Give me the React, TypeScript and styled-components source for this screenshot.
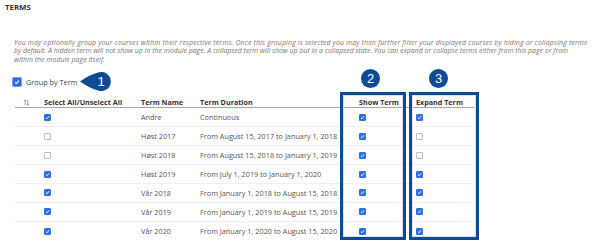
import React from 'react';
import styled, { createGlobalStyle } from 'styled-components';

const GlobalStyle = createGlobalStyle`
  body {
    margin: 0;
    background: #fff;
    font-family: "Open Sans", "Liberation Sans", sans-serif;
  }
`;

const BLUE = "#0f4b94";
const CHECK_BLUE = "#2f6fe6";

const Page = styled.div`
  width: 600px;
  height: 252px;
  padding: 2px 0 0 5px;
  box-sizing: border-box;
  display: flex;
  flex-direction: column;
  overflow: hidden;
`;

const Title = styled.div`
  font-size: 7.8px;
  line-height: 10px;
  font-weight: 700;
  color: #333;
`;

const Intro = styled.div`
  margin: 26.7px 0 0 9px;
  font-size: 6.9px;
  line-height: 8.6px;
  font-style: italic;
  color: #777;
  white-space: nowrap;
`;

const IntroLine = styled.div<{ spread: number }>`
  letter-spacing: ${p => p.spread}px;
`;

const GroupRow = styled.label`
  height: 20px;
  margin-top: 8px;
  display: flex;
  align-items: center;
  padding-left: 8px;
  font-size: 7.3px;
  color: #444;
`;

const GroupText = styled.span`
  margin-left: 5px;
`;

const Box = styled.span<{ size: number; checked: boolean; ring?: boolean }>`
  width: ${p => p.size}px;
  height: ${p => p.size}px;
  box-sizing: border-box;
  border-radius: 1px;
  display: inline-flex;
  align-items: center;
  justify-content: center;
  background: ${p => (p.checked ? CHECK_BLUE : "#fff")};
  border: 1px solid ${p => (p.checked ? CHECK_BLUE : "#bbb")};
  box-shadow: ${p => (p.ring ? "0 0 0 1px #6f9be8" : "none")};
`;

const Checkbox = ({ size, checked, ring }: { size: number; checked: boolean; ring?: boolean }) => (
  <Box size={size} checked={checked} ring={ring}>
    {checked && (
      <svg width={size - 2} height={size - 2} viewBox="0 0 10 10">
        <path d="M2 5.5 L4.2 7.5 L8 2.5" stroke="#fff" strokeWidth="1.8" fill="none" />
      </svg>
    )}
  </Box>
);

const ArrowBadge = styled.svg`
  margin-left: 3px;
  margin-top: -2px;
`;

const TableWrap = styled.div`
  position: relative;
  margin-left: 10px;
  width: 459px;
  padding-top: 5px;
`;

const COLUMNS = "29px 97px 59px 159px 57px 58px";

const HeadRow = styled.div`
  display: grid;
  grid-template-columns: ${COLUMNS};
  height: 10px;
  align-items: center;
  font-size: 7.2px;
  font-weight: 700;
  color: #333;
  border-bottom: 1.5px solid #a8a8a8;
`;

const Row = styled.div<{ last?: boolean }>`
  display: grid;
  grid-template-columns: ${COLUMNS};
  height: 18.9px;
  box-sizing: border-box;
  align-items: center;
  font-size: 7.3px;
  color: #555;
  border-bottom: ${p => (p.last ? "none" : "1px solid #efefef")};
`;

const Cell = styled.div`
  display: flex;
  align-items: center;
  white-space: nowrap;
`;

const SortCell = styled(Cell)`
  padding-left: 8px;
`;

const Highlight = styled.div<{ left: number; width: number }>`
  position: absolute;
  top: 0;
  left: ${p => p.left}px;
  width: ${p => p.width}px;
  height: 148px;
  box-sizing: border-box;
  border: 3px solid ${BLUE};
  box-shadow: inset 0 0 0 1px #d6e2f2;
  pointer-events: none;
`;

const Badge = styled.div<{ left: number }>`
  position: absolute;
  top: -23px;
  left: ${p => p.left}px;
  width: 19px;
  height: 19px;
  border-radius: 50%;
  background: ${BLUE};
  color: #fff;
  font-family: "Liberation Sans", Arial, sans-serif;
  font-size: 13px;
  line-height: 19px;
  text-align: center;
`;

type Term = { name: string; duration: string; select: boolean; show: boolean; expand: boolean };

const TERMS: Term[] = [
  { name: "Andre", duration: "Continuous", select: true, show: true, expand: true },
  { name: "Høst 2017", duration: "From August 15, 2017 to January 1, 2018", select: false, show: true, expand: false },
  { name: "Høst 2018", duration: "From August 15, 2018 to January 1, 2019", select: false, show: true, expand: false },
  { name: "Høst 2019", duration: "From July 1, 2019 to January 1, 2020", select: true, show: true, expand: true },
  { name: "Vår 2018", duration: "From January 1, 2018 to August 15, 2018", select: true, show: true, expand: true },
  { name: "Vår 2019", duration: "From January 1, 2019 to August 15, 2019", select: true, show: true, expand: true },
  { name: "Vår 2020", duration: "From January 1, 2020 to August 15, 2020", select: true, show: true, expand: true },
];

const SortIcon = () => (
  <svg width="7" height="7" viewBox="0 0 8 8">
    <path d="M2.5 7 V1 M1 2.5 L2.5 1 L4 2.5 M5.5 1 V7 M4 5.5 L5.5 7 L7 5.5" stroke="#888" strokeWidth="0.9" fill="none" />
  </svg>
);

const App: React.FC = () => {
  return (
    <Page>
      <GlobalStyle />
      <Title>TERMS</Title>
      <Intro>
        <IntroLine spread={0.17}>
          You may optionally group your courses within their respective terms. Once this grouping is selected you may then further filter your displayed courses by hiding or collapsing terms
        </IntroLine>
        <IntroLine spread={0.02}>
          by default. A hidden term will not show up in the module page. A collapsed term will show up but in a collapsed state. You can expand or collapse terms either from this page or from
        </IntroLine>
        <IntroLine spread={0.05}>within the module page itself.</IntroLine>
      </Intro>
      <GroupRow>
        <Checkbox size={8} checked ring />
        <GroupText>Group by Term</GroupText>
        <ArrowBadge width="31" height="19" viewBox="0 0 31 19">
          <path d="M0 9.5 Q9 3 18 0.6 A9.5 9.5 0 1 1 18 18.4 Q9 16 0 9.5 Z" fill={BLUE} />
          <text x="21" y="14" fill="#fff" fontSize="13" textAnchor="middle" fontFamily="Liberation Sans, Arial, sans-serif">1</text>
        </ArrowBadge>
      </GroupRow>
      <TableWrap>
        <HeadRow>
          <SortCell><SortIcon /></SortCell>
          <Cell>Select All/Unselect All</Cell>
          <Cell>Term Name</Cell>
          <Cell>Term Duration</Cell>
          <Cell>Show Term</Cell>
          <Cell>Expand Term</Cell>
        </HeadRow>
        {TERMS.map((t, i) => (
          <Row key={t.name} last={i === TERMS.length - 1}>
            <Cell />
            <Cell><Checkbox size={7} checked={t.select} /></Cell>
            <Cell>{t.name}</Cell>
            <Cell>{t.duration}</Cell>
            <Cell><Checkbox size={7} checked={t.show} /></Cell>
            <Cell><Checkbox size={7} checked={t.expand} /></Cell>
          </Row>
        ))}
        <Highlight left={325} width={66} />
        <Highlight left={394} width={70} />
        <Badge left={346}>2</Badge>
        <Badge left={414}>3</Badge>
      </TableWrap>
    </Page>
  );
};

export default App;
